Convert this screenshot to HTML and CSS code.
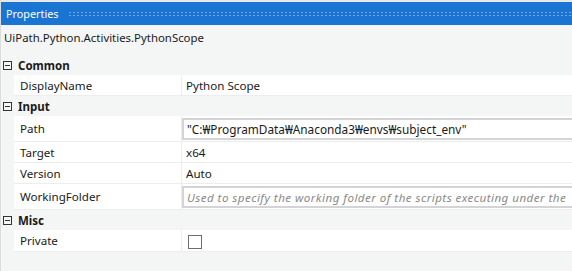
FILE: index.html
```html
<!DOCTYPE html>
<html lang="ko">
<head>
  <meta charset="UTF-8">
  <title>Properties</title>
  <link rel="stylesheet" href="styles.css">
</head>
<body>
  <div class="panel">
    <div class="titlebar">
      <span class="title">Properties</span>
      <span class="grip"></span>
    </div>
    <div class="typename">UiPath.Python.Activities.PythonScope</div>

    <div class="grid">
      <div class="category"><span class="toggle"></span><span class="cat-name">Common</span></div>
      <div class="prop">
        <div class="name">DisplayName</div>
        <div class="value">Python Scope</div>
      </div>

      <div class="category"><span class="toggle"></span><span class="cat-name">Input</span></div>
      <div class="prop tall">
        <div class="name">Path</div>
        <div class="value"><div class="box">"C:₩ProgramData₩Anaconda3₩envs₩subject_env"</div></div>
      </div>
      <div class="prop">
        <div class="name">Target</div>
        <div class="value">x64</div>
      </div>
      <div class="prop">
        <div class="name">Version</div>
        <div class="value">Auto</div>
      </div>
      <div class="prop tall">
        <div class="name">WorkingFolder</div>
        <div class="value"><div class="box hint">Used to specify the working folder of the scripts executing under the</div></div>
      </div>

      <div class="category"><span class="toggle"></span><span class="cat-name">Misc</span></div>
      <div class="prop">
        <div class="name">Private</div>
        <div class="value"><span class="check"></span></div>
      </div>
    </div>
  </div>
</body>
</html>
```

FILE: styles.css
```css
body {
  margin: 0;
  background: #f4f5f5;
  font-family: "Noto Sans", "Noto Sans CJK KR", sans-serif;
  font-size: 11.6px;
  color: #1a1a1a;
  overflow: hidden;
}
.panel {
  width: 572px;
  height: 271px;
  border-left: 1px solid #dcdcdc;
  box-sizing: border-box;
}
.titlebar {
  height: 23px;
  border-top: 2px solid #e6e7e8;
  background: #1a74d2;
  display: flex;
  align-items: center;
}
.title {
  color: #fff;
  font-size: 10.8px;
  padding-left: 5px;
  padding-right: 10px;
}
.grip {
  flex: 1;
  height: 6px;
  background-image: radial-gradient(circle, #6fa8e6 0.8px, transparent 1px);
  background-size: 4px 3px;
}
.typename {
  height: 30px;
  line-height: 25px;
  padding-left: 3px;
  font-size: 11.4px;
}
.category {
  height: 20px;
  display: flex;
  align-items: center;
}
.toggle {
  width: 9px;
  height: 9px;
  border: 1px solid #333;
  margin: 0 6px 0 2px;
  position: relative;
  box-sizing: border-box;
}
.toggle::after {
  content: "";
  position: absolute;
  left: 1px;
  right: 1px;
  top: 3px;
  height: 1px;
  background: #333;
}
.cat-name {
  font-weight: bold;
  font-size: 11.5px;
}
.prop {
  display: grid;
  grid-template-columns: 168px 1fr;
  margin-left: 13px;
  height: 20px;
  border-bottom: 1px solid #eceeee;
  background: #fff;
}
.prop.tall {
  height: 25px;
}
.name {
  padding-left: 6px;
  display: flex;
  align-items: center;
  border-right: 1px solid #eceeee;
}
.value {
  padding-left: 4px;
  display: flex;
  align-items: center;
  white-space: nowrap;
  overflow: hidden;
}
.box {
  flex: 1;
  height: 22px;
  border: 2px solid #d4d4d6;
  border-right: none;
  box-sizing: border-box;
  padding-left: 3px;
  display: flex;
  align-items: center;
  margin-left: -4px;
  margin-top: 1px;
  font-size: 11.8px;
}
.hint {
  color: #8a8a8a;
  font-style: italic;
  font-size: 11.6px;
  letter-spacing: 0.45px;
}
.check {
  width: 14px;
  height: 14px;
  border: 1px solid #6e6e6e;
  box-sizing: border-box;
  margin-left: 2px;
  margin-top: 2px;
}
.grid .prop:last-child {
  height: 21px;
}
```
